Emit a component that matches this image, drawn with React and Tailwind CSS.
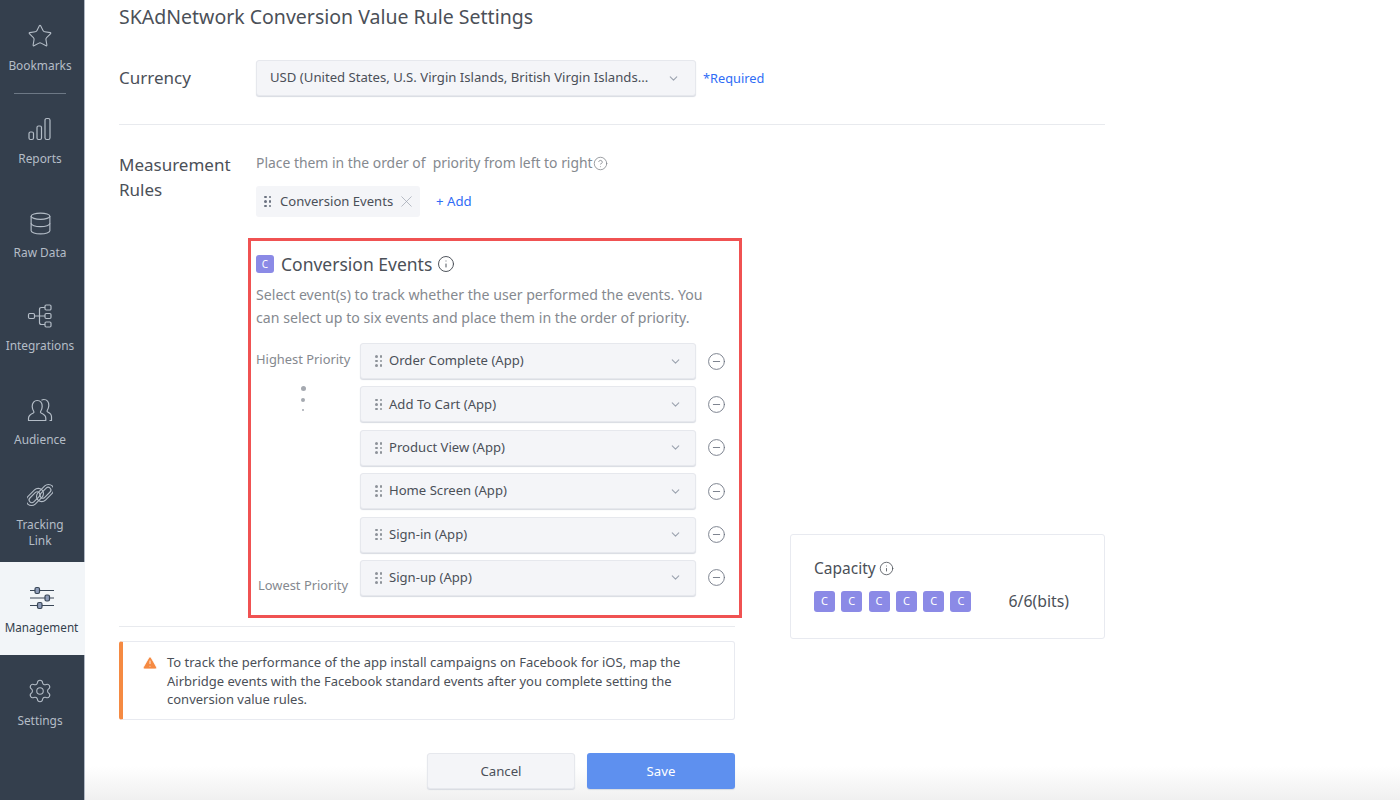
import React from "react";
import { Star, Database, Settings, ChevronDown, X, CircleMinus, Info, CircleHelp, TriangleAlert } from "lucide-react";

const Bars = () => (
  <svg width="24" height="24" viewBox="0 0 24 24" fill="none" stroke="currentColor" strokeWidth="1.2">
    <rect x="1" y="15" width="4.500" height="7.500" rx="1.500" />
    <rect x="9" y="9" width="4.500" height="13.500" rx="1.500" />
    <rect x="17" y="1.500" width="5" height="21" rx="1.800" />
  </svg>
);
const Net = () => (
  <svg width="26" height="26" viewBox="0 0 26 26" fill="none" stroke="currentColor" strokeWidth="1.2">
    <rect x="1.500" y="10.500" width="6" height="5" rx="1.200" />
    <rect x="18" y="2" width="6" height="5" rx="1.200" />
    <rect x="18" y="10.500" width="6" height="5" rx="1.200" />
    <rect x="18" y="19" width="6" height="5" rx="1.200" />
    <path d="M7.500 13H18M12.500 13V6.500q0-2 2-2H18M12.500 13v6.500q0 2 2 2H18" />
  </svg>
);
const People = () => (
  <svg width="26" height="24" viewBox="0 0 26 24" fill="none" stroke="currentColor" strokeWidth="1.200" strokeLinejoin="round">
    <path d="M1.500 22.500v-2.300c0-2.600 2.200-4 4.800-5.200.6-.3.8-.9.5-1.500C5.700 11.800 5.200 10.300 5.200 8.600 5.200 4.900 7.300 2.500 10.200 2.500s5 2.400 5 6.100c0 1.700-.5 3.200-1.600 4.900-.3.600-.1 1.200.5 1.500 2.600 1.200 4.700 2.600 4.700 5.200v2.300z" />
    <path d="M14.500 2.200c.8-.5 1.600-.7 2.300-.7 2.900 0 5 2.400 5 6.100 0 1.700-.5 3.200-1.600 4.900-.3.600-.1 1.200.5 1.500 2.100 1 3.800 2.400 3.800 4.700v3.800h-2" />
  </svg>
);
const ChainLink = () => (
  <svg width="26" height="26" viewBox="0 0 26 26" fill="none" stroke="currentColor" strokeWidth="1.100">
    <g transform="rotate(-45 13 13)">
      <rect x="-2" y="5.500" width="20" height="10.500" rx="5.250" />
      <rect x="8" y="10" width="20" height="10.500" rx="5.250" />
      <rect x="1" y="8" width="13" height="5.500" rx="2.750" />
      <rect x="12" y="12.500" width="13" height="5.500" rx="2.750" />
    </g>
  </svg>
);
const Sliders = () => (
  <svg width="26" height="24" viewBox="0 0 26 24" fill="none" stroke="#3a4757" strokeWidth="1.200">
    <path d="M1 4.500h24M1 12h24M1 19.500h24" />
    <rect x="6" y="1.500" width="4.500" height="6" rx="1.500" fill="#8f9dba" />
    <rect x="16" y="9" width="4.500" height="6" rx="1.500" fill="#8f9dba" />
    <rect x="8.500" y="16.500" width="4.500" height="6" rx="1.500" fill="#8f9dba" />
  </svg>
);
const Grip = ({ color = "bg-[#6b7280]" }) => (
  <span className="grid grid-cols-2 gap-x-[2px] gap-y-[2px] w-[7px] shrink-0">
    {[0, 1, 2, 3, 4, 5].map((i) => (
      <span key={i} className={`w-[2.500px] h-[2.500px] rounded-full ${color}`} />
    ))}
  </span>
);

const navItems = [
  { label: "Bookmarks", icon: <Star size={26} strokeWidth={1} />, cls: "h-[93px]" },
  { label: "Reports", icon: <Bars />, cls: "h-[94px]" },
  { label: "Raw Data", icon: <Database size={25} strokeWidth={1.1} />, cls: "h-[93px]" },
  { label: "Integrations", icon: <Net />, cls: "h-[94px]" },
  { label: "Audience", icon: <People />, cls: "h-[94px]" },
  { label: ["Tracking", "Link"], icon: <ChainLink />, cls: "h-[94px]" },
];

const rows = ["Order Complete (App)", "Add To Cart (App)", "Product View (App)", "Home Screen (App)", "Sign-in (App)", "Sign-up (App)"];

const Badge = () => (
  <span className="w-[21px] h-[21px] rounded-[3px] bg-[#8b8ae6] text-white text-[11px] flex items-center justify-center shrink-0">C</span>
);

function NavItem({ item }) {
  const two = Array.isArray(item.label);
  return (
    <div className={`${item.cls} w-[80px] flex flex-col items-center text-[#b4bdc7] ${two ? "pt-[14px]" : "pt-[23px]"}`}>
      <div className="h-[26px] flex items-center justify-center">{item.icon}</div>
      <div className={`text-[11.900px] text-center leading-[16px] ${two ? "mt-[8px]" : "mt-[8px]"}`}>
        {two ? item.label.map((l) => <div key={l}>{l}</div>) : item.label}
      </div>
    </div>
  );
}

export default function App() {
  return (
    <div className="relative flex h-[800px] w-[1400px] overflow-hidden bg-white text-[#4b5058] font-['Noto_Sans',sans-serif]">
      <div className="absolute left-[85px] right-0 bottom-0 h-[34px] bg-gradient-to-b from-transparent to-[#f0f0f0]" />

      <aside className="relative w-[85px] shrink-0 bg-[#343f4d] border-r border-[#b0b8c4]">
        {navItems.map((item, i) => (
          <React.Fragment key={i}>
            <NavItem item={item} />
            {i === 0 && <div className="absolute top-[93px] left-[14px] w-[52px] h-px bg-[#6d7885]" />}
          </React.Fragment>
        ))}
        <div className="h-[93px] w-[85px] bg-[#f2f5f8] flex flex-col items-center pt-[23px] pr-[2px] text-[#343f4d]">
          <div className="h-[26px] flex items-center"><Sliders /></div>
          <div className="text-[11.700px] leading-[16px] mt-[8px]">Management</div>
        </div>
        <NavItem item={{ label: "Settings", icon: <Settings size={26} strokeWidth={1} />, cls: "h-[94px]" }} />
      </aside>

      <main className="relative flex-1 pl-[34px] pt-[4px]">
        <h1 className="text-[19.500px] leading-[26px] font-normal text-[#4b5058]">SKAdNetwork Conversion Value Rule Settings</h1>

        <div className="w-[986px] flex items-center mt-[30px] pb-[28px] border-b border-[#e8eaee]">
          <div className="w-[137px] text-[17px]">Currency</div>
          <div className="w-[440px] h-[36px] flex items-center justify-between pl-[13px] pr-[15px] bg-[#f4f5f8] rounded-[3px] border border-[#e6e8ed] shadow-[0_1px_1px_#d8dbe2] text-[13.150px]">
            <span>USD (United States, U.S. Virgin Islands, British Virgin Islands...</span>
            <ChevronDown size={13} className="text-[#9ca3af]" />
          </div>
          <span className="ml-[7px] mt-px text-[12.800px] text-[#2f6df6]">*Required</span>
        </div>

        <div className="flex">
          <div className="w-[622px] shrink-0">
            <div className="flex pt-[27px]">
              <div className="w-[137px] text-[17px] leading-[25px]">Measurement<br />Rules</div>
              <div className="flex-1">
                <div className="flex items-center text-[13.900px] leading-[24px] -mt-px text-[#85898f]">
                  <span>Place them in the order of&nbsp; priority from left to right</span>
                  <CircleHelp size={15} strokeWidth={1.300} />
                </div>
                <div className="flex items-center mt-[11px]">
                  <div className="w-[164px] h-[31px] bg-[#f4f5f8] rounded-[3px] flex items-center pl-[8px] pr-[4px] text-[13.100px]">
                    <Grip />
                    <span className="ml-[9px] flex-1">Conversion Events</span>
                    <X size={19} strokeWidth={0.900} className="text-[#9ca3af]" />
                  </div>
                  <span className="ml-[16px] text-[13.200px] text-[#2f6df6]">+ Add</span>
                </div>
              </div>
            </div>

            <div className="ml-[129px] mt-[21px] w-[494px] h-[380px] border-[3px] border-[#f05252] pl-[5px] pt-[11px]">
              <div className="flex items-center h-[24px]">
                <span className="w-[18px] h-[18px] rounded-[3px] bg-[#8b8ae6] text-white text-[10px] flex items-center justify-center">C</span>
                <span className="ml-[7px] text-[17.500px] text-[#4b5058]">Conversion Events</span>
                <Info size={18} strokeWidth={1.300} className="ml-[5px]" />
              </div>
              <p className="mt-[8px] text-[14.150px] leading-[22.500px] text-[#85898f] w-[460px]">
                Select event(s) to track whether the user performed the events. You can select up to six events and place them in the order of priority.
              </p>
              <div className="mt-[14px] flex flex-col gap-[7.400px]">
                {rows.map((r, i) => (
                  <div key={r} className="flex items-center">
                    <div className="relative w-[104px] text-[12.900px] text-[#85898f] shrink-0">
                      {i === 0 && <span className="block -mt-[3px]">Highest Priority</span>}
                      {i === 1 && (
                        <span className="absolute left-[44px] -top-[18px] flex flex-col items-center gap-[7px] w-[6px]">
                          <span className="w-[5px] h-[5px] rounded-full bg-[#a5a9b0]" />
                          <span className="w-[3.500px] h-[3.500px] rounded-full bg-[#a5a9b0]" />
                          <span className="w-[2.500px] h-[2.500px] rounded-full bg-[#a5a9b0]" />
                        </span>
                      )}
                      {i === 5 && <span className="block pl-[2px] mt-[16px]">Lowest Priority</span>}
                    </div>
                    <div className="w-[336px] h-[36px] flex items-center bg-[#f4f5f8] rounded-[3px] border border-[#e6e8ed] shadow-[0_1px_1px_#d8dbe2] pl-[14px] pr-[13px] text-[13.100px] shrink-0">
                      <Grip color="bg-[#8d9299]" />
                      <span className="ml-[7px] flex-1">{r}</span>
                      <ChevronDown size={13} className="text-[#9ca3af]" />
                    </div>
                    <CircleMinus size={19} strokeWidth={1.100} className="ml-[11px] text-[#6b7280]" />
                  </div>
                ))}
              </div>
            </div>

            <div className="w-[616px] h-px bg-[#e8eaee] mt-[8px]" />

            <div className="w-[616px] h-[79px] mt-[14px] flex items-start rounded-[3px] border border-[#e8eaf0] border-l-[4px] border-l-[#f58a42] pl-[19px] pr-[40px] pt-[11px]">
              <TriangleAlert size={16} fill="#f58a42" stroke="#ffffff" strokeWidth={1.200} className="mt-[2px] shrink-0" />
              <p className="ml-[9px] text-[13px] leading-[18.500px] text-[#4b5058]">
                To track the performance of the app install campaigns on Facebook for iOS, map the Airbridge events with the Facebook standard events after you complete setting the conversion value rules.
              </p>
            </div>

            <div className="w-[616px] flex justify-end gap-[12px] mt-[33px]">
              <button className="w-[148px] h-[36px] pt-px rounded-[3px] bg-[#f4f5f8] border border-[#e6e8ed] shadow-[0_1px_1px_#d8dbe2] text-[13.200px]">Cancel</button>
              <button className="w-[148px] h-[36px] pt-px rounded-[3px] bg-[#5e90ef] shadow-[0_1px_1px_#d8dbe2] text-white text-[13.200px]">Save</button>
            </div>
          </div>

          <div className="ml-[49px] mt-[409px] w-[315px] h-[105px] rounded-[3px] border border-[#e8eaf0] pl-[23px] pt-[21px]">
            <div className="flex items-center gap-[3px] text-[15.500px] leading-[24px]">
              Capacity <Info size={15} strokeWidth={1.300} />
            </div>
            <div className="flex items-center mt-[9px]">
              <div className="flex gap-[6.300px]">
                {[0, 1, 2, 3, 4, 5].map((i) => <Badge key={i} />)}
              </div>
              <span className="ml-[37px] text-[15.800px] leading-[24px]">6/6(bits)</span>
            </div>
          </div>
        </div>
      </main>
    </div>
  );
}
